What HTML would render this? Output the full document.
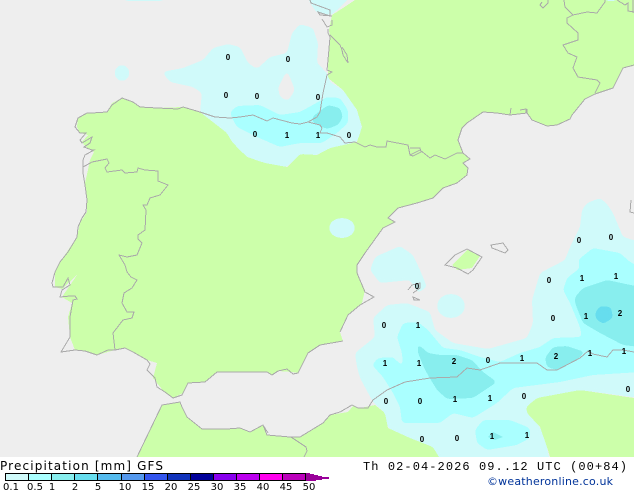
<!DOCTYPE html>
<html>
<head>
<meta charset="utf-8">
<style>
html,body{margin:0;padding:0;background:#fff}
body{width:634px;height:490px;overflow:hidden}
svg{display:block}
.s{shape-rendering:crispEdges}
</style>
</head>
<body>
<svg width="634" height="490" viewBox="0 0 634 490" xmlns="http://www.w3.org/2000/svg">
<defs>
<filter id="sm" filterUnits="userSpaceOnUse" x="-20" y="-20" width="680" height="520" color-interpolation-filters="sRGB">
<feGaussianBlur stdDeviation="2"/>
<feComponentTransfer><feFuncA type="discrete" tableValues="0 1"/></feComponentTransfer>
</filter>
</defs>
<rect width="634" height="457" fill="#eeeeee" class="s"/>
<g fill="#ccffaa" class="s">
<!-- Iberia + France -->
<path d="M107,112 L112,103 122,98 133,102 140,107 157,108 183,107 200,112 227,133 247,157 287,167 300,154 317,155 330,148 357,142 362,127 357,110 343,90 328,78 328,67 330,38 329,30 332,15 343,8 355,0 634,0 634,66 623,68 617,80 613,88 595,94 585,99 572,115 570,119 557,125 547,126 532,120 527,113 510,115 497,113 483,112 467,123 462,128 458,140 463,153 470,159 463,163 468,168 467,175 457,183 443,188 433,198 417,203 398,208 388,218 395,222 383,228 365,253 357,265 358,275 365,290 362,303 348,315 340,332 343,341 320,345 308,353 298,373 292,372 278,371 272,375 267,372 217,372 205,382 188,383 183,393 173,398 165,393 153,378 157,363 147,360 133,352 125,348 115,350 97,355 85,351 75,350 70,337 68,317 72,303 62,297 77,275 62,289 55,287 55,272 60,262 77,237 80,223 87,212 87,200 85,183 88,170 90,160 94,152 85,146 82,142 88,135 80,133 77,127 78,118 87,113 Z"/>
<!-- Morocco -->
<path d="M137,457 L162,405 180,402 182,407 187,417 202,429 227,429 240,428 250,432 263,425 267,435 290,437 300,437 323,423 330,415 348,412 353,406 360,408 375,405 385,413 388,428 410,438 433,447 442,457 Z"/>
<!-- Algeria -->
<path d="M526,407 L537,398 580,390 634,398 634,457 550,457 547,447 540,427 527,413 Z"/>
<!-- Mallorca -->
<path d="M452,265 L468,249 480,256 472,268 457,270 Z"/>
</g>
<!-- 0.1 -->
<g fill="#d0fafa" filter="url(#sm)">
<path fill-rule="evenodd" d="M162,72 L183,68 203,60 213,48 228,44 240,47 248,63 257,69 270,57 287,53 292,33 300,24 313,28 318,43 317,63 327,73 330,82 343,90 357,110 362,127 357,142 330,148 317,155 300,154 287,167 265,163 247,157 232,142 227,133 200,112 202,93 193,87 170,82 Z M287,70 L295,90 288,101 280,97 278,88 Z"/>
<ellipse cx="122" cy="73" rx="7.5" ry="8"/>
<path d="M123,-6 H165 V0 L160,1 H128 L123,0 Z"/>
<path d="M307,-6 L310,3 317,13 332,15 353,-6 Z"/>
<path d="M605,-6 H617 V1 H605 Z"/>
<ellipse cx="342" cy="228" rx="13" ry="10"/>
<path d="M370,270 L375,257 400,246 413,255 420,270 427,287 418,293 410,280 380,283 Z"/>
<ellipse cx="451" cy="306" rx="14" ry="12"/>
<path d="M587,203 L600,198 607,204 613,213 623,237 640,242 640,398 580,390 537,398 526,407 527,413 540,427 547,447 550,462 442,462 433,447 410,438 388,428 385,413 373,402 360,378 357,367 355,353 375,337 373,318 387,305 407,303 430,312 435,330 453,343 488,349 527,338 533,323 532,300 540,273 565,260 570,247 580,227 582,210 Z"/>
</g>
<!-- 0.5 -->
<g fill="#aaffff" filter="url(#sm)">
<path d="M230,112 L237,106 260,105 280,115 300,112 327,97 340,98 348,110 348,123 337,133 322,143 300,143 280,147 257,137 237,127 232,118 Z"/>
<path d="M578,260 L593,248 620,253 630,262 640,267 640,372 593,375 560,382 513,388 497,403 473,418 453,413 440,423 402,423 400,407 393,393 383,377 372,365 378,358 393,357 403,367 402,353 397,337 403,323 418,322 428,330 443,348 460,350 480,357 500,362 520,353 540,347 553,338 582,337 580,327 570,303 563,290 567,278 580,268 Z"/>
<path d="M475,430 L483,420 510,420 530,428 530,438 517,445 487,450 477,443 Z"/>
</g>
<!-- 1-2 -->
<g fill="#88eeee" filter="url(#sm)">
<path d="M312,117 L328,105 340,108 343,117 338,125 327,129 313,123 Z"/>
<path d="M575,297 L583,288 607,280 640,287 640,347 623,345 600,333 583,323 575,303 Z"/>
<path d="M417,343 L418,353 425,370 437,390 447,399 473,398 497,382 483,372 472,360 457,355 440,355 428,353 Z"/>
<path d="M545,358 L553,347 567,346 585,352 577,360 557,370 547,367 Z"/>
</g>
<path fill="#88eeee" d="M488,437 L493,432 503,437 495,440 Z"/>
<!-- 2-5 -->
<path fill="#66ddee" filter="url(#sm)" d="M595,313 L600,306 611,307 613,318 603,324 596,319 Z"/>
<!-- lines -->
<g fill="none" stroke="#aaaaaa" stroke-width="1" class="s">
<path d="M310,0 L311,3 330,10 330,16 318,12 320,15 332,16 M322,19 L327,27 332,25 332,20 M328,29 L328,33 330,37 328,60 327,70 332,72 327,75 323,93 320,112 317,117 308,122 300,124 292,123 273,118 267,121 253,115 240,117 230,118 215,117 200,112 183,107 178,109 157,108 140,107 133,102 122,98 112,105 107,112 92,113 87,113 78,118 75,127 80,133 86,133 80,140 82,143 92,137 90,143 84,147 92,150 94,150 85,155 83,160"/>
<path d="M330,35 L340,45 342,50 343,55 348,63 347,55 342,47"/>
<path d="M308,122 L320,125 322,128 320,133 327,133 340,137 345,143 355,142 365,147 370,145 377,147 386,147 387,141 408,145 410,155 420,150 430,158 435,155 445,159 457,153 463,153 470,159 463,163 468,168 467,175 457,183 443,188 433,198 417,203 398,208 388,218 395,222 383,228 365,253 357,265 357,273 365,292 374,297 360,305 348,315 340,332"/>
<path d="M410,148 L420,148 421,152 413,156 410,155"/>
<path d="M463,153 L458,140 462,128 467,123 483,112 497,113 510,115 527,113 532,120 547,126 557,125 570,119 572,115 585,99 595,94 613,88 617,80 623,68 634,65"/>
<path d="M527,113 L527,109 M510,115 L511,108 M520,110 L526,109 526,113"/>
<path d="M548,0 L548,3 543,8 540,5 542,2"/>
<path d="M564,0 L565,7 573,15 587,12 597,13 605,2 605,0"/>
<path d="M573,15 L567,18 567,23 578,33 578,40 563,45 568,53 577,57 573,68 578,77 597,80 600,83 595,93"/>
<path d="M617,0 L625,5 628,3 628,11 634,12 M633,0 V13"/>
<path d="M631,200 L630,212 634,213"/>
<path d="M83,160 L83,173 85,185 87,200 86,212 82,218 78,227 77,237 68,252 60,262 55,272 52,283 53,287 63,287 68,278 70,285 62,290 60,297 70,296 75,296 77,299 73,300 70,317 70,337 61,352 75,350 85,351 97,355 108,350 115,350 125,348 133,352 147,360 150,364 147,370 155,378 157,387 165,392 173,398 182,395 183,393 188,383 205,382 217,372 267,372 272,375 278,371 287,369 293,374 298,373 308,353 320,345 343,341"/>
<path d="M83,167 L92,162 107,159 109,163 105,168 107,172 122,170 125,173 137,172 138,168 145,170 158,171 158,181 168,185 160,195 150,198 147,205 143,205 146,210 145,230 138,235 138,239 142,243 137,255 127,257 119,255 125,265 127,272 131,277 137,280 132,288 124,293 122,303 127,312 134,312 132,318 123,320 113,333 115,350"/>
<path d="M137,457 L162,405 180,402 182,407 187,417 202,429 227,429 240,428 250,432 263,425 267,435 290,437 300,437 323,423 330,415 340,412 352,405 358,408 368,408 373,400 387,390 405,382 430,378 457,377 467,368 480,370 500,363 537,363 547,370 557,370 580,358 588,351 593,354 607,357 613,350 623,350 634,352"/>
<path d="M263,425 L268,433 M291,437 L306,447 307,451 304,457"/>
<path d="M445,265 L455,255 467,249 482,257 473,270 468,274 457,268 Z"/>
<path d="M491,245 L503,243 508,250 505,253 492,248 Z"/>
<path d="M408,290 L412,285 420,283 420,288 413,293"/>
<path d="M413,297 L420,300 414,300 Z"/>
</g>
<!-- grid labels -->
<g font-family="'Liberation Sans',sans-serif" font-size="8" font-weight="bold" fill="#000" text-anchor="middle">
<text x="228" y="60">0</text><text x="288" y="62">0</text><text x="226" y="98">0</text><text x="257" y="99">0</text><text x="318" y="100">0</text><text x="255" y="137">0</text><text x="287" y="138">1</text><text x="318" y="138">1</text><text x="349" y="138">0</text>
<text x="579" y="243">0</text><text x="611" y="240">0</text><text x="582" y="281">1</text><text x="616" y="279">1</text><text x="549" y="283">0</text><text x="417" y="289">0</text><text x="553" y="321">0</text><text x="586" y="319">1</text><text x="620" y="316">2</text><text x="384" y="328">0</text><text x="418" y="328">1</text><text x="385" y="366">1</text><text x="419" y="366">1</text><text x="454" y="364">2</text><text x="488" y="363">0</text><text x="522" y="361">1</text><text x="556" y="359">2</text><text x="590" y="356">1</text><text x="624" y="354">1</text><text x="628" y="392">0</text><text x="386" y="404">0</text><text x="420" y="404">0</text><text x="455" y="402">1</text><text x="490" y="401">1</text><text x="524" y="399">0</text><text x="422" y="442">0</text><text x="457" y="441">0</text><text x="492" y="439">1</text><text x="527" y="438">1</text>
</g>
<!-- footer -->
<rect y="457" width="634" height="33" fill="#fff" class="s"/>
<g class="s">
<rect x="5" y="473" width="23.5" height="8" fill="#d0fafa"/>
<rect x="28.5" y="473" width="23" height="8" fill="#aaffff"/>
<rect x="51.5" y="473" width="23" height="8" fill="#88eeee"/>
<rect x="74.5" y="473" width="23" height="8" fill="#66ddee"/>
<rect x="97.5" y="473" width="23.5" height="8" fill="#55bbee"/>
<rect x="121" y="473" width="23.5" height="8" fill="#5599ee"/>
<rect x="144.5" y="473" width="23" height="8" fill="#3355ee"/>
<rect x="167.5" y="473" width="23" height="8" fill="#1133bb"/>
<rect x="190.5" y="473" width="23" height="8" fill="#000099"/>
<rect x="213.5" y="473" width="23" height="8" fill="#8800ee"/>
<rect x="236.5" y="473" width="23" height="8" fill="#bb00ee"/>
<rect x="259.5" y="473" width="23" height="8" fill="#ff00ee"/>
<rect x="282.5" y="473" width="23" height="8" fill="#bb00bb"/>
<path fill="#990099" d="M306,473 H310 V474 H314 V475 H318 V476 H322 V477 H329 V479 H322 V480 H316 V481 H306 Z"/>
<path fill="none" stroke="#000" stroke-width="1" d="M5.5,473.5 H305.5 V480.5 H5.5 Z M28.5,473 V481 M51.5,473 V481 M74.5,473 V481 M97.5,473 V481 M121.5,473 V481 M144.5,473 V481 M167.5,473 V481 M190.5,473 V481 M213.5,473 V481 M236.5,473 V481 M259.5,473 V481 M282.5,473 V481"/>
</g>
<text x="0" y="470" font-family="'DejaVu Sans',sans-serif" font-size="12" fill="#000" textLength="163" lengthAdjust="spacing">Precipitation [mm] GFS</text>
<g font-family="'DejaVu Sans',sans-serif" font-size="10" fill="#000" text-anchor="middle">
<text x="11" y="490">0.1</text><text x="35" y="490">0.5</text><text x="52" y="490">1</text><text x="75" y="490">2</text><text x="98" y="490">5</text><text x="125" y="490">10</text><text x="148" y="490">15</text><text x="171" y="490">20</text><text x="194" y="490">25</text><text x="217" y="490">30</text><text x="240" y="490">35</text><text x="263" y="490">40</text><text x="286" y="490">45</text><text x="309" y="490">50</text>
</g>
<text x="363" y="470" font-family="'Liberation Mono',monospace" font-size="12" fill="#000" textLength="264" lengthAdjust="spacing">Th 02-04-2026 09..12 UTC (00+84)</text>
<text x="487" y="485" font-family="'DejaVu Sans',sans-serif" font-size="11" fill="#003399" textLength="126" lengthAdjust="spacing">©weatheronline.co.uk</text>
</svg>
</body>
</html>
